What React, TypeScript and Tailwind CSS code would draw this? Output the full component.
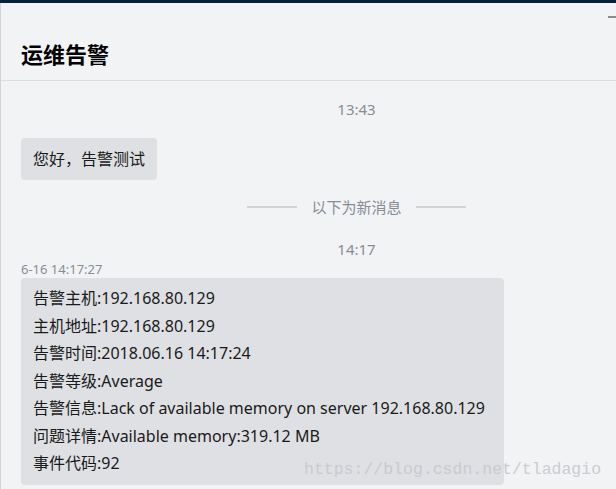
import React from 'react';

const lines = [
  '告警主机:192.168.80.129',
  '主机地址:192.168.80.129',
  '告警时间:2018.06.16 14:17:24',
  '告警等级:Average',
  '告警信息:Lack of available memory on server 192.168.80.129',
  '问题详情:Available memory:319.12 MB',
  '事件代码:92',
];

const font = { fontFamily: '"Noto Sans", "Noto Sans CJK SC", sans-serif' };

export default function App() {
  return (
    <div
      className="relative w-[616px] h-[489px] overflow-hidden bg-[#f2f3f5] text-[#1a1a1a]"
      style={font}
    >
      {/* top window bar */}
      <div className="h-[3px] bg-[#0b1e3a]" />

      <div className="flex h-[486px]">
        <div className="w-px bg-[#d3d4d6] shrink-0" />
        <div className="w-[711px] shrink-0 flex flex-col">
          {/* Header */}
          <header className="relative h-[78px] border-b border-[#dcdde0] pl-5 pt-[35px]">
            <h1 className="text-[22px] leading-[32px] font-bold text-black">运维告警</h1>
            <span className="absolute left-[607px] top-[13px] w-[9px] h-[2px] bg-[#8c8c8c]" />
          </header>

          {/* Messages */}
          <div className="flex flex-col w-[691px] pl-5">
            <div className="mt-[18px] text-center text-[15px] leading-[20px] text-[#878d97]">13:43</div>

            <div className="mt-[19px] self-start rounded-[4px] bg-[#dfe0e3] px-3 py-[10px] text-[16px] leading-[22px]">
              您好，告警测试
            </div>

            <div className="mt-[17px] flex items-center justify-center gap-[14px] h-5">
              <span className="w-[50px] h-[2px] bg-[#d2d3d6]" />
              <span className="text-[15px] leading-[20px] text-[#878d97]">以下为新消息</span>
              <span className="w-[50px] h-[2px] bg-[#d2d3d6]" />
            </div>

            <div className="mt-[22px] text-center text-[15px] leading-[20px] text-[#878d97]">14:17</div>

            <div className="mt-[2px] text-[13px] leading-[16px] text-[#878d97]">6-16 14:17:27</div>

            <div className="mt-px w-[483px] rounded-[4px] bg-[#dfe0e3] px-3 py-[7px] text-[16px] leading-[27.5px]">
              {lines.map((l) => (
                <div key={l} className="whitespace-nowrap">{l}</div>
              ))}
            </div>
          </div>
        </div>
      </div>

      {/* watermark */}
      <div
        className="absolute left-[304px] top-[458px] text-[16.5px] leading-[24px] text-[#c6c9ce] opacity-90 pointer-events-none"
        style={{ fontFamily: '"Liberation Mono", monospace' }}
      >
        https://blog.csdn.net/tladagio
      </div>
    </div>
  );
}
